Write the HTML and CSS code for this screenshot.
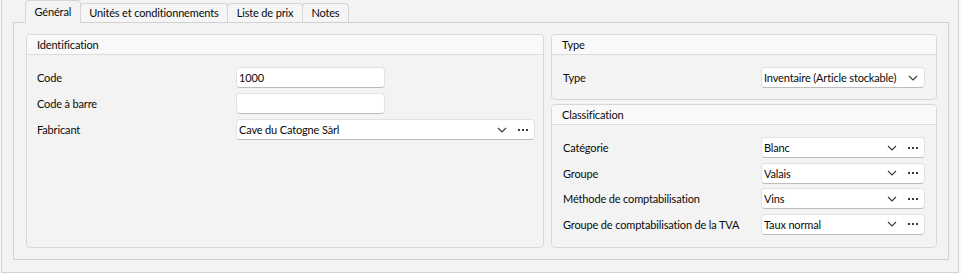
FILE: index.html
```html
<!DOCTYPE html>
<html lang="fr">
<head>
<meta charset="utf-8">
<title>Article</title>
<link rel="stylesheet" href="styles.css">
</head>
<body>
<div class="frame">
  <div class="tabs">
    <div class="tab active">Général</div>
    <div class="tab">Unités et conditionnements</div>
    <div class="tab">Liste de prix</div>
    <div class="tab">Notes</div>
  </div>
  <div class="pane">
    <section class="group ident">
      <div class="group-title">Identification</div>
      <div class="group-body form-left">
        <div class="label">Code</div>
        <div class="input short"><span class="val">1000</span></div>
        <div class="label">Code à barre</div>
        <div class="input short"><span class="val"></span></div>
        <div class="label">Fabricant</div>
        <div class="input combo"><span class="val">Cave du Catogne Sàrl</span>
          <svg class="chev" viewBox="0 0 10 6" width="10" height="6"><path d="M1 1 L5 5 L9 1" fill="none" stroke="#3a3a3a" stroke-width="1.1"/></svg>
          <svg class="dots" viewBox="0 0 10 2" width="10" height="2"><rect x="0" y="0" width="2" height="2" fill="#3a3a3a"/><rect x="4" y="0" width="2" height="2" fill="#3a3a3a"/><rect x="8" y="0" width="2" height="2" fill="#3a3a3a"/></svg>
        </div>
      </div>
    </section>
    <div class="col-right">
      <section class="group type">
        <div class="group-title">Type</div>
        <div class="group-body form-right">
          <div class="label">Type</div>
          <div class="input combo"><span class="val">Inventaire (Article stockable)</span>
            <svg class="chev last" viewBox="0 0 10 6" width="10" height="6"><path d="M1 1 L5 5 L9 1" fill="none" stroke="#3a3a3a" stroke-width="1.1"/></svg>
          </div>
        </div>
      </section>
      <section class="group classif">
        <div class="group-title">Classification</div>
        <div class="group-body form-right classif-body">
          <div class="label">Catégorie</div>
          <div class="input combo"><span class="val">Blanc</span>
            <svg class="chev" viewBox="0 0 10 6" width="10" height="6"><path d="M1 1 L5 5 L9 1" fill="none" stroke="#3a3a3a" stroke-width="1.1"/></svg>
            <svg class="dots" viewBox="0 0 10 2" width="10" height="2"><rect x="0" y="0" width="2" height="2" fill="#3a3a3a"/><rect x="4" y="0" width="2" height="2" fill="#3a3a3a"/><rect x="8" y="0" width="2" height="2" fill="#3a3a3a"/></svg>
          </div>
          <div class="label">Groupe</div>
          <div class="input combo"><span class="val">Valais</span>
            <svg class="chev" viewBox="0 0 10 6" width="10" height="6"><path d="M1 1 L5 5 L9 1" fill="none" stroke="#3a3a3a" stroke-width="1.1"/></svg>
            <svg class="dots" viewBox="0 0 10 2" width="10" height="2"><rect x="0" y="0" width="2" height="2" fill="#3a3a3a"/><rect x="4" y="0" width="2" height="2" fill="#3a3a3a"/><rect x="8" y="0" width="2" height="2" fill="#3a3a3a"/></svg>
          </div>
          <div class="label">Méthode de comptabilisation</div>
          <div class="input combo"><span class="val">Vins</span>
            <svg class="chev" viewBox="0 0 10 6" width="10" height="6"><path d="M1 1 L5 5 L9 1" fill="none" stroke="#3a3a3a" stroke-width="1.1"/></svg>
            <svg class="dots" viewBox="0 0 10 2" width="10" height="2"><rect x="0" y="0" width="2" height="2" fill="#3a3a3a"/><rect x="4" y="0" width="2" height="2" fill="#3a3a3a"/><rect x="8" y="0" width="2" height="2" fill="#3a3a3a"/></svg>
          </div>
          <div class="label">Groupe de comptabilisation de la TVA</div>
          <div class="input combo"><span class="val">Taux normal</span>
            <svg class="chev" viewBox="0 0 10 6" width="10" height="6"><path d="M1 1 L5 5 L9 1" fill="none" stroke="#3a3a3a" stroke-width="1.1"/></svg>
            <svg class="dots" viewBox="0 0 10 2" width="10" height="2"><rect x="0" y="0" width="2" height="2" fill="#3a3a3a"/><rect x="4" y="0" width="2" height="2" fill="#3a3a3a"/><rect x="8" y="0" width="2" height="2" fill="#3a3a3a"/></svg>
          </div>
        </div>
      </section>
    </div>
  </div>
</div>
</body>
</html>
```

FILE: styles.css
```css
* { box-sizing: border-box; }

html, body {
  margin: 0;
  padding: 0;
}

body {
  background: #f9f9f9;
  font-family: Lato, "Noto Sans", sans-serif;
  font-size: 11px;
  letter-spacing: -0.15px;
  color: #0a0a0a;
  width: 962px;
  height: 273px;
  overflow: hidden;
}

.frame {
  margin-left: 1px;
  width: 958px;
  height: 273px;
  background: #f3f3f3;
  border-left: 1px solid #d2d2d2;
  border-right: 1px solid #d2d2d2;
  border-bottom: 1px solid #d2d2d2;
  padding-left: 11px;
}

.tabs {
  display: flex;
  align-items: flex-end;
  height: 22px;
  padding-left: 12px;
}

.tab {
  position: relative;
  height: 19px;
  padding: 0 8.5px;
  margin-right: -1px;
  border: 1px solid #d6d6d6;
  border-bottom: none;
  border-radius: 4px 4px 0 0;
  background: #f5f5f5;
  line-height: 17px;
  white-space: nowrap;
}

.tab.active {
  height: 23px;
  margin-bottom: -1px;
  z-index: 1;
  background: #f3f3f3;
  line-height: 22px;
}

.pane {
  width: 936px;
  height: 238px;
  border: 1px solid #d2d2d2;
  padding: 11px 11px 11px 12px;
  display: grid;
  grid-template-columns: 518px 1fr;
  column-gap: 7px;
}

.col-right {
  display: flex;
  flex-direction: column;
  gap: 4px;
}

.group {
  border: 1px solid #d8d8d8;
  border-radius: 4px;
  background: #f3f3f3;
}

.type { height: 66px; }
.classif { height: 144px; }

.group-title {
  height: 20px;
  line-height: 19px;
  padding-left: 10px;
  background: #f9f9f9;
  border-bottom: 1px solid #dcdcdc;
  border-radius: 3px 3px 0 0;
}

.group-body {
  display: grid;
  align-items: center;
  padding-top: 12px;
}

.form-left {
  grid-template-columns: 199px 1fr;
  row-gap: 5px;
  padding-left: 10px;
  padding-right: 8px;
}

.form-right {
  grid-template-columns: 1fr 164px;
  padding-left: 11px;
  padding-right: 11px;
}

.classif-body {
  row-gap: 4.67px;
}

.label {
  white-space: nowrap;
}

.input {
  height: 21px;
  background: #ffffff;
  border: 1px solid #e2e2e2;
  border-bottom-color: #bdbdbd;
  border-radius: 4px;
  display: flex;
  align-items: center;
  padding-left: 2px;
  padding-right: 6px;
}

.input.short {
  width: 149px;
}

.val {
  flex: 1;
  white-space: nowrap;
  overflow: hidden;
}

.chev {
  flex: none;
  margin-right: 11px;
}

.chev.last {
  margin-right: 0;
}

.dots {
  flex: none;
}
```
